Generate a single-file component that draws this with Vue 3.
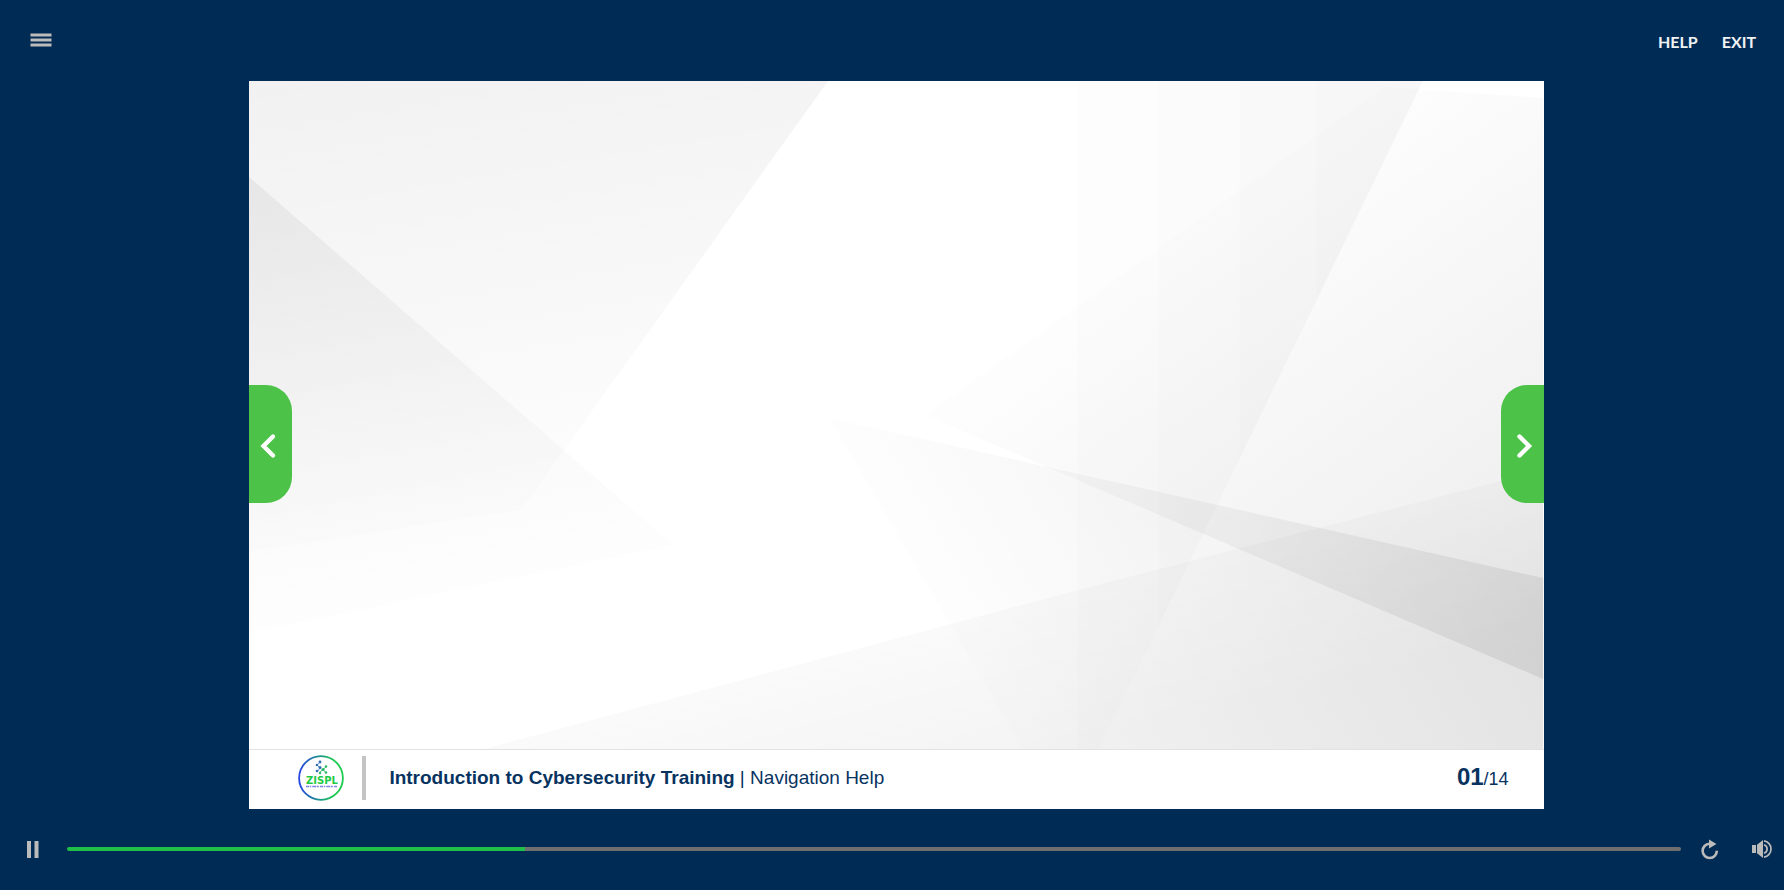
<script setup>
import { ref, computed } from 'vue'

const menuLinks = ['HELP', 'EXIT']
const position = ref(284)
const seekStyle = computed(() => ({ '--played': position.value / 10 + '%' }))
</script>

<template>
  <div class="player">
    <header class="topbar">
      <button class="icon-btn" type="button" aria-label="Menu">
        <svg width="24" height="16" viewBox="0 0 24 16" aria-hidden="true">
          <path d="M1.5 3h21M1.5 8h21M1.5 13h21" stroke="#bdbcbc" stroke-width="2.8" />
        </svg>
      </button>
      <nav class="links">
        <a v-for="link in menuLinks" :key="link" href="#">{{ link }}</a>
      </nav>
    </header>

    <main class="stage-area">
      <section class="stage">
        <div class="scene">
          <svg class="backdrop" viewBox="0 0 1294 668" preserveAspectRatio="none" aria-hidden="true">
            <defs>
              <linearGradient id="topLeft" gradientUnits="userSpaceOnUse" x1="0" y1="0" x2="77" y2="452">
                <stop offset="0" stop-opacity=".055" />
                <stop offset="1" stop-opacity=".008" />
              </linearGradient>
              <linearGradient id="leftEdge" gradientUnits="userSpaceOnUse" x1="0" y1="96" x2="88" y2="534">
                <stop offset="0" stop-opacity=".054" />
                <stop offset="1" stop-opacity=".006" />
              </linearGradient>
              <linearGradient id="fromBelow" gradientUnits="userSpaceOnUse" x1="580" y1="337" x2="1040" y2="67">
                <stop offset="0" stop-opacity=".007" />
                <stop offset="1" stop-opacity=".072" />
              </linearGradient>
              <linearGradient id="fromAbove" gradientUnits="userSpaceOnUse" x1="676" y1="334" x2="1006" y2="792">
                <stop offset="0" stop-opacity=".006" />
                <stop offset="1" stop-opacity=".078" />
              </linearGradient>
              <linearGradient id="floor" gradientUnits="userSpaceOnUse" x1="829" y1="509" x2="871" y2="664">
                <stop offset="0" stop-opacity=".02" />
                <stop offset="1" stop-opacity=".046" />
              </linearGradient>
            </defs>
            <path d="M0 0H579L272 429L0 470Z" fill="url(#topLeft)" />
            <path d="M0 96L424 464L0 552Z" fill="url(#leftEdge)" />
            <path d="M580 337L1294 497V668H774Z" fill="url(#fromBelow)" />
            <path d="M676 334L1135 6L1294 17V598Z" fill="url(#fromAbove)" />
            <g fill-opacity=".007">
              <path d="M828 0H1174L850 668H828Z" />
              <path d="M909 0H1174L909 546Z" />
              <path d="M990 0H1174L990 379Z" />
              <path d="M1067 0H1174L1067 220Z" />
            </g>
            <path d="M235 668L829 509L1294 389V668Z" fill="url(#floor)" />
          </svg>
          <button class="turn turn-prev" type="button" aria-label="Previous slide">
            <svg width="43" height="118" viewBox="0 0 43 118" aria-hidden="true">
              <path d="M24 51.5L14.5 61L24 70.5" fill="none" stroke="#fff" stroke-width="4.4" stroke-linecap="round" />
            </svg>
          </button>
          <button class="turn turn-next" type="button" aria-label="Next slide">
            <svg width="43" height="118" viewBox="0 0 43 118" aria-hidden="true">
              <path d="M18.5 51.5L28 61L18.5 70.5" fill="none" stroke="#fff" stroke-width="4.4" stroke-linecap="round" />
            </svg>
          </button>
        </div>

        <footer class="caption">
          <svg class="logo" width="46" height="46" viewBox="0 0 46 46" role="img" aria-label="ZISPL">
            <defs>
              <linearGradient id="ring" x1="0" x2="1" y1="0" y2="0">
                <stop offset="0" stop-color="#2846e0" />
                <stop offset=".5" stop-color="#1a9a86" />
                <stop offset=".8" stop-color="#1fca50" />
              </linearGradient>
            </defs>
            <circle cx="23" cy="23" r="21.9" fill="#fff" stroke="url(#ring)" stroke-width="1.8" />
            <path d="M22 7L19 10L22 13L19 17" fill="none" stroke="#6f9fd2" stroke-width="1" />
            <path d="M28 12L25 14.5L28 18M25 14.5L22 17" fill="none" stroke="#5cc493" stroke-width="1" />
            <g fill="#2f6db4">
              <circle cx="22" cy="7" r="1.4" /><circle cx="19" cy="10" r="1.3" /><circle cx="19" cy="16" r="1.3" />
              <circle cx="22" cy="12.5" r="1.5" />
            </g>
            <g fill="#27b765">
              <circle cx="28" cy="11.5" r="1.3" /><circle cx="25" cy="14.5" r="1.6" /><circle cx="28" cy="17.5" r="1.2" />
              <circle cx="22" cy="18" r="1.2" />
            </g>
            <text class="logo-name" x="24" y="29" text-anchor="middle">ZISPL</text>
            <path d="M8 31.5H39" stroke="#8086e6" stroke-width="1.4" stroke-dasharray="3 .7 1.5 1 4 .6 2 1.2" />
          </svg>
          <span class="divider"></span>
          <h1 class="title"><strong>Introduction to Cybersecurity Training</strong> | Navigation Help</h1>
          <p class="count"><strong>01</strong>/14</p>
        </footer>
      </section>
    </main>

    <div class="controls">
      <button class="icon-btn" type="button" aria-label="Pause">
        <svg width="14" height="20" viewBox="0 0 14 20" aria-hidden="true">
          <path d="M1 2h4v17H1zM8.5 2h4v17h-4z" fill="#bbb" />
        </svg>
      </button>
      <input v-model="position" class="seek" :style="seekStyle" type="range" min="0" max="1000" aria-label="Slide progress" />
      <button class="icon-btn" type="button" aria-label="Replay">
        <svg width="18" height="22" viewBox="0 0 18 22" aria-hidden="true">
          <path d="M8.5 5.8A7.1 7.1 0 1 0 15.8 12.8" fill="none" stroke="#bbb" stroke-width="2.6" />
          <path d="M8 1.5L15.5 6L8 10.5Z" fill="#bbb" />
        </svg>
      </button>
      <button class="icon-btn volume" type="button" aria-label="Volume">
        <svg width="22" height="20" viewBox="0 0 22 20" aria-hidden="true">
          <path d="M1 6h4v8H1zM6 5.8L12 1V19L6 14.2Z" fill="#bbb" />
          <path d="M13 5.8A4.4 4.4 0 0 1 13 14.2" fill="none" stroke="#bbb" stroke-width="1.7" />
          <path d="M13 1.8A8.3 8.3 0 0 1 13 18.2" fill="none" stroke="#bbb" stroke-width="1.7" />
        </svg>
      </button>
    </div>
  </div>
</template>

<style>
body {
  margin: 0;
  background: #002b54;
}
</style>

<style scoped>
.player {
  display: grid;
  grid-template-rows: 81px 1fr 81px;
  min-height: 100vh;
  background: #002b54;
  font-family: "Liberation Sans", Arial, sans-serif;
}

.icon-btn {
  display: flex;
  padding: 0;
  border: 0;
  background: none;
  cursor: pointer;
}

.topbar {
  display: flex;
  box-sizing: border-box;
  align-items: center;
  justify-content: space-between;
  padding: 0 28px 2px 29px;
}

.links {
  display: flex;
  gap: 24px;
  padding-top: 4px;
}

.links a {
  color: #f0f2f4;
  font: 700 16px/18px Lato, sans-serif;
  text-decoration: none;
}

.stage-area {
  display: flex;
  justify-content: center;
  padding-left: 9px;
}

.stage {
  display: flex;
  flex-direction: column;
  height: calc(100vh - 162px);
  aspect-ratio: 16 / 9;
  background: #fff;
  position: relative;
}

.scene {
  flex: 1;
  min-height: 0;
}

.backdrop {
  display: block;
  width: 100%;
  height: 100%;
}

.turn {
  position: absolute;
  top: 50%;
  display: flex;
  margin-top: -60px;
  padding: 0;
  border: 0;
  background: #4cc249;
  cursor: pointer;
}

.turn-prev {
  left: 0;
  border-radius: 0 26px 26px 0;
}

.turn-next {
  right: 0;
  border-radius: 26px 0 0 26px;
}

.caption {
  display: flex;
  align-items: center;
  box-sizing: border-box;
  height: 60px;
  padding: 0 35px 3px 49px;
  border-top: 1px solid #e2e2e2;
  color: #08335f;
}

.logo-name {
  fill: #1fcb45;
  font: bold 10px "DejaVu Sans", sans-serif;
}

.divider {
  width: 4px;
  height: 44px;
  margin: 0 23px 0 18px;
  background: #c4c4c4;
}

.title {
  flex: 1;
  margin: 0;
  font-size: 19px;
  font-weight: 400;
  line-height: 24px;
}

.count {
  margin: 0;
  font-size: 18px;
  line-height: 24px;
}

.count strong {
  font-size: 24px;
}

.controls {
  display: flex;
  box-sizing: border-box;
  align-items: center;
  padding: 0 11px 1px 26px;
}

.seek {
  flex: 1;
  height: 4px;
  margin: 0 20px 0 27px;
  appearance: none;
  border-radius: 2px;
  background: linear-gradient(to right, #20bf48 var(--played), #6f6f70 var(--played));
  cursor: pointer;
}

.seek::-webkit-slider-thumb {
  appearance: none;
  width: 0;
  height: 0;
}

.volume {
  margin-left: 32px;
}
</style>
